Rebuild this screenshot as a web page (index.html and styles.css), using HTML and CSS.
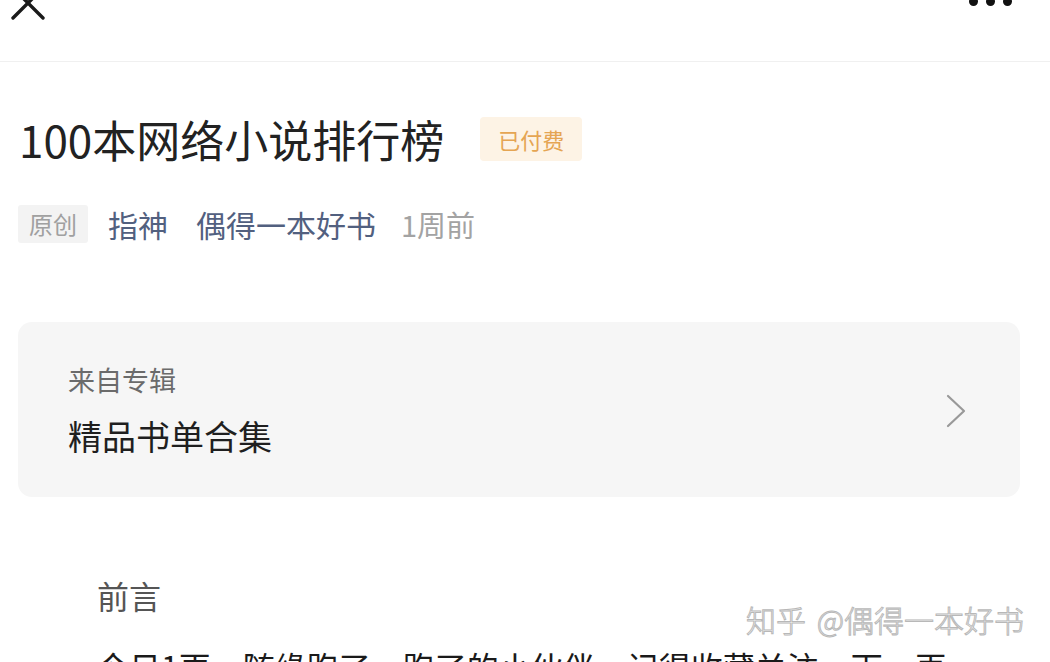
FILE: index.html
```html
<!DOCTYPE html>
<html lang="zh-CN">
<head>
    <meta charset="UTF-8">
    <meta name="viewport" content="width=device-width, initial-scale=1.0">
    <title>100本网络小说排行榜</title>
    <link rel="stylesheet" href="styles.css">
</head>
<body>

    <!-- 顶部栏 -->
    <header class="topbar">
        <button class="icon-btn close-btn" aria-label="关闭">
            <svg width="36" height="36" viewBox="0 0 36 36">
                <path d="M3 3 L33 33 M33 3 L3 33" stroke="#1a1a1a" stroke-width="3.4" stroke-linecap="round" fill="none"/>
            </svg>
        </button>
        <button class="icon-btn more-btn" aria-label="更多">
            <span class="dot"></span><span class="dot"></span><span class="dot"></span>
        </button>
    </header>

    <main class="article">
        <div class="title-row">
            <h1 class="title">100本网络小说排行榜</h1>
            <span class="paid-badge">已付费</span>
        </div>

        <div class="meta-row">
            <span class="tag">原创</span>
            <a class="author" href="#">指神</a>
            <a class="author" href="#">偶得一本好书</a>
            <span class="time">1周前</span>
        </div>

        <!-- 专辑卡片 -->
        <a class="album-card" href="#">
            <div class="album-info">
                <div class="album-label">来自专辑</div>
                <div class="album-name">精品书单合集</div>
            </div>
            <svg class="chevron" width="24" height="36" viewBox="0 0 24 36">
                <path d="M4 3 L20 18 L4 33" stroke="#999" stroke-width="2.2" fill="none" stroke-linecap="round" stroke-linejoin="round"/>
            </svg>
        </a>

        <section class="content">
            <h2 class="section-title">前言</h2>
            <p class="para">今日1更，随缘跑了，跑了的小伙伴，记得收藏关注一下，再</p>
            <div class="watermark">知乎 <span class="wm-at">@</span>偶得一本好书</div>
        </section>
    </main>

</body>
</html>
```

FILE: styles.css
```css
/* 全局 */
* {
    margin: 0;
    padding: 0;
    box-sizing: border-box;
}

body {
    background-color: #fff;
    color: #1a1a1a;
    font-family: "Noto Sans CJK SC", "Noto Sans", sans-serif;
    overflow: hidden;
    height: 662px;
}

a {
    color: inherit;
    text-decoration: none;
}

button {
    background: none;
    border: none;
    cursor: pointer;
}

/* 顶部栏 */
.topbar {
    height: 62px;
    display: flex;
    justify-content: space-between;
    align-items: flex-start;
    border-bottom: 1px solid #f0f0f0;
    padding: 0 38px 0 10px;
}

.close-btn {
    margin-top: -15px;
    display: flex;
}

.more-btn {
    display: flex;
    gap: 8px;
    margin-top: -3px;
}

.more-btn .dot {
    width: 9px;
    height: 9px;
    border-radius: 50%;
    background-color: #111;
}

/* 文章 */
.article {
    padding: 49px 30px 0 18px;
}

.title-row {
    display: flex;
    align-items: center;
}

.title {
    font-size: 44px;
    font-weight: 400;
    line-height: 56px;
    margin-left: 1px;
    color: #222;
}

.paid-badge {
    margin-left: 36px;
    background-color: #fdf3e5;
    color: #e5a553;
    font-size: 22px;
    line-height: 44px;
    padding: 0 18px;
    border-radius: 4px;
}

.meta-row {
    display: flex;
    align-items: center;
    margin-top: 38px;
    height: 38px;
}

.tag {
    background-color: #f3f3f3;
    color: #a0a0a0;
    font-size: 24px;
    line-height: 38px;
    padding: 0 11px;
    border-radius: 3px;
    margin-right: 20px;
}

.author {
    color: #52607f;
    font-size: 30px;
    margin-right: 28px;
}

.time {
    color: #a3a3a3;
    font-size: 29px;
    margin-left: -3px;
}

/* 专辑卡片 */
.album-card {
    display: flex;
    justify-content: space-between;
    align-items: center;
    margin-top: 79px;
    background-color: #f6f6f6;
    border-radius: 14px;
    padding: 40px 52px 39px 50px;
}

.album-label {
    font-size: 27px;
    line-height: 36px;
    color: #6b6b6b;
}

.album-name {
    margin-top: 16px;
    font-size: 34px;
    line-height: 44px;
    color: #1f1f1f;
}

.chevron {
    margin-top: 2px;
}

/* 正文 */
.content {
    position: relative;
    margin-top: 76px;
    padding-left: 79px;
}

.section-title {
    font-size: 32px;
    font-weight: 400;
    line-height: 44px;
    color: #555;
}

.para {
    margin-top: 23px;
    font-size: 32px;
    line-height: 52px;
    color: #1a1a1a;
    white-space: nowrap;
}

.watermark {
    position: absolute;
    right: -4px;
    top: 24px;
    font-size: 30px;
    font-weight: 300;
    line-height: 44px;
    color: rgba(255, 255, 255, 0.9);
    -webkit-text-stroke: 1px #b8b8b8;
}

.wm-at {
    margin-left: 4px;
}
```
